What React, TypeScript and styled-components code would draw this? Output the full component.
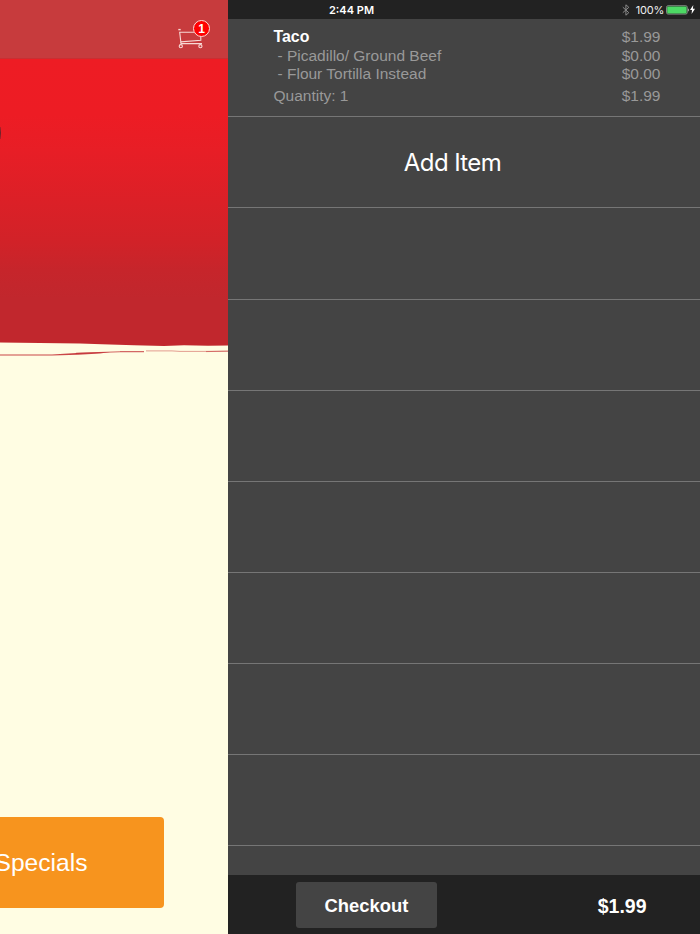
import styled, { createGlobalStyle } from 'styled-components';

type OrderLine = {
	label: string;
	price: string;
	kind?: 'title' | 'option' | 'total';
};

const orderLines: OrderLine[] = [
	{ label: 'Taco', price: '$1.99', kind: 'title' },
	{ label: '- Picadillo/ Ground Beef', price: '$0.00', kind: 'option' },
	{ label: '- Flour Tortilla Instead', price: '$0.00', kind: 'option' },
	{ label: 'Quantity: 1', price: '$1.99', kind: 'total' },
];

const emptyRows = Array.from({ length: 8 }, (_, i) => i);

const CartIcon = () => (
	<svg width="28" height="24" viewBox="0 0 28 24" fill="none" stroke="#f8d9d5" strokeWidth="1.1">
		<path d="M0.3 3.6h2.4" strokeWidth="1.4" />
		<path d="M16 6.2H1.7L2.8 15.8 22.8 14.2V9.5" />
		<path d="M2.8 15.8 3 17.6h21" />
		<circle cx="2.8" cy="20.2" r="1.6" />
		<circle cx="22.4" cy="20.2" r="1.6" />
	</svg>
);

const TornEdge = () => (
	<svg width="228" height="15" viewBox="0 0 228 15" fill="#c1272d">
		<path d="M0 0h228v4.6l-20 .2-24-.6-20 .8-30-.7-32-1-22-.7-20-.3L0 1.6z" />
		<path d="M0 13.5h52l24-1.4 24-.8 10-.4-10 1.5-22 1.4-26 .8H0z" opacity="0.85" />
		<path d="M76 12.2l30-1 14-.4M120 10.6h24" stroke="#c1272d" strokeWidth="1.1" fill="none" opacity="0.7" />
		<path d="M146 9.9h26l8 .5h24l24-.3" stroke="#c1272d" strokeWidth="1" fill="none" opacity="0.45" />
		<path d="M206 10.6l22-.4" stroke="#c1272d" strokeWidth="1" fill="none" opacity="0.5" />
	</svg>
);

const BluetoothIcon = () => (
	<svg width="8" height="12" viewBox="0 0 8 12" fill="none" stroke="#8a8a8a" strokeWidth="1">
		<path d="M.8 3.2 6.8 8.7 3.9 11.2V.8l2.9 2.5-6 5.4" />
	</svg>
);

const BatteryIcon = () => (
	<svg width="24" height="10" viewBox="0 0 24 10">
		<rect x="0.5" y="0.7" width="20.8" height="8.4" rx="1.6" fill="#222" stroke="#a9b4aa" strokeWidth="0.7" />
		<rect x="1.2" y="1.4" width="19.4" height="7" rx="1" fill="#4cd964" />
		<path d="M22.2 3.4c1.2.5 1.2 2.5 0 3z" fill="#bbb" />
	</svg>
);

const BoltIcon = () => (
	<svg width="5" height="9" viewBox="0 0 5 9" fill="#fff">
		<path d="M3.3 0 0 4.9h2L1.6 9 5 3.8H2.9z" />
	</svg>
);

const App = () => (
	<>
		<GlobalStyle />
		<Screen>
			<MenuPane>
				<NavBar>
					<CartButton>
						<CartIcon />
						<CartBadge>1</CartBadge>
					</CartButton>
				</NavBar>
				<Banner>
					<BannerMark />
				</Banner>
				<TornEdge />
				<MenuBody>
					<SpecialsButton>Specials</SpecialsButton>
				</MenuBody>
			</MenuPane>
			<OrderPane>
				<StatusBar>
					<Clock>2:44 PM</Clock>
					<StatusGroup>
						<BluetoothIcon />
						<BatteryLabel>100%</BatteryLabel>
						<BatteryIcon />
						<BoltIcon />
					</StatusGroup>
				</StatusBar>
				<OrderList>
					<OrderItem>
						{orderLines.map(({ label, price, kind }) => (
							<OrderRow key={label} $total={kind === 'total'}>
								<OrderLabel $kind={kind}>{label}</OrderLabel>
								<span>{price}</span>
							</OrderRow>
						))}
					</OrderItem>
					<AddItem>Add Item</AddItem>
					{emptyRows.map((row) => (
						<EmptyRow key={row} />
					))}
				</OrderList>
				<Footer>
					<CheckoutButton>Checkout</CheckoutButton>
					<Total>$1.99</Total>
				</Footer>
			</OrderPane>
		</Screen>
	</>
);

const GlobalStyle = createGlobalStyle`
	* {
		box-sizing: border-box;
	}

	body {
		margin: 0;
		font-family: 'Liberation Sans', Arial, sans-serif;
		overflow: hidden;
	}

	svg {
		display: block;
		flex-shrink: 0;
	}

	button {
		padding: 0;
		border: 0;
		font-family: inherit;
	}
`;

const Screen = styled.div`
	display: flex;
	width: 700px;
	height: 934px;
	overflow: hidden;
`;

const MenuPane = styled.div`
	display: flex;
	flex-direction: column;
	flex: 0 0 228px;
	overflow: hidden;
	background: #fffde3;
`;

const NavBar = styled.div`
	display: flex;
	justify-content: flex-end;
	height: 59px;
	padding: 26px 22px 0 0;
	background: #c73b3d;
	border-bottom: 1px solid #c92f32;
`;

const CartButton = styled.div`
	position: relative;
	width: 28px;
	height: 24px;
`;

const CartBadge = styled.span`
	position: absolute;
	top: -6px;
	left: 15px;
	width: 17px;
	height: 17px;
	border: 1px solid #ffd9d5;
	border-radius: 50%;
	background: #f00;
	color: #fff;
	font-size: 12px;
	font-weight: bold;
	line-height: 16px;
	text-align: center;
`;

const Banner = styled.div`
	height: 282px;
	padding-top: 68px;
	background: linear-gradient(180deg, #ee1c24 0%, #ed1c24 20%, #e71e26 33%, #db2027 51%, #d12228 65%, #c6252b 75%, #c1272d 85%, #c1272d 100%);
`;

const BannerMark = styled.div`
	width: 1px;
	height: 12px;
	background: linear-gradient(180deg, #b82028, #6b232a 50%, #b82028);
`;

const MenuBody = styled.div`
	display: flex;
	flex: 1;
	flex-direction: column;
	justify-content: flex-end;
	padding-bottom: 26px;
`;

const SpecialsButton = styled.button`
	width: 164px;
	height: 91px;
	border-radius: 0 4px 4px 0;
	padding: 1px 76.5px 0 0;
	background: #f7941e;
	color: #fff;
	font-size: 24.6px;
	display: flex;
	align-items: center;
	justify-content: flex-end;
`;

const OrderPane = styled.div`
	display: flex;
	flex-direction: column;
	flex: 1;
	background: #444;
`;

const StatusBar = styled.div`
	display: flex;
	align-items: center;
	justify-content: space-between;
	flex: 0 0 18.5px;
	padding: 1px 5px 0 101px;
	background: #222;
	color: #fff;
	font-family: Inter, sans-serif;
	font-size: 11px;
`;

const Clock = styled.span`
	font-weight: 600;
`;

const StatusGroup = styled.div`
	display: flex;
	align-items: center;
`;

const BatteryLabel = styled.span`
	margin: 0 2px 0 6px;
	color: #eee;
	letter-spacing: -0.2px;
`;

const OrderList = styled.div`
	flex: 1;
	min-height: 0;
	overflow: hidden;
`;

const Cell = styled.div`
	height: 91.15px;
	border-bottom: 1px solid #767676;
`;

const OrderItem = styled(Cell)`
	height: 98.8px;
	padding: 9.8px 39.5px 0 45.5px;
	color: #999;
	font-size: 15.5px;
	line-height: 18.4px;
`;

const OrderRow = styled.div<{ $total: boolean }>`
	display: flex;
	justify-content: space-between;
	margin-top: ${({ $total }) => ($total ? '3.2px' : '0')};
`;

const OrderLabel = styled.span<{ $kind?: OrderLine['kind'] }>`
	padding-left: ${({ $kind }) => ($kind === 'option' ? '4px' : '0')};
	color: ${({ $kind }) => ($kind === 'title' ? '#fff' : 'inherit')};
	font-size: ${({ $kind }) => ($kind === 'title' ? '15.9px' : 'inherit')};
	font-weight: ${({ $kind }) => ($kind === 'title' ? 'bold' : 'normal')};
`;

const AddItem = styled(Cell)`
	display: flex;
	align-items: center;
	justify-content: center;
	padding: 1px 23px 0 0;
	color: #fff;
	font-family: Inter, sans-serif;
	font-size: 24px;
	letter-spacing: -0.6px;
`;

const EmptyRow = styled(Cell)``;

const Footer = styled.div`
	display: flex;
	align-items: center;
	justify-content: space-between;
	flex: 0 0 59.5px;
	padding: 2px 53.5px 0 68px;
	background: #222;
	color: #fff;
`;

const CheckoutButton = styled.button`
	width: 141px;
	height: 46px;
	border-radius: 3px;
	padding-top: 2px;
	background: #444;
	color: #fff;
	font-size: 18.4px;
	font-weight: bold;
`;

const Total = styled.span`
	padding-top: 2px;
	font-size: 19.5px;
	font-weight: bold;
`;

export default App;
